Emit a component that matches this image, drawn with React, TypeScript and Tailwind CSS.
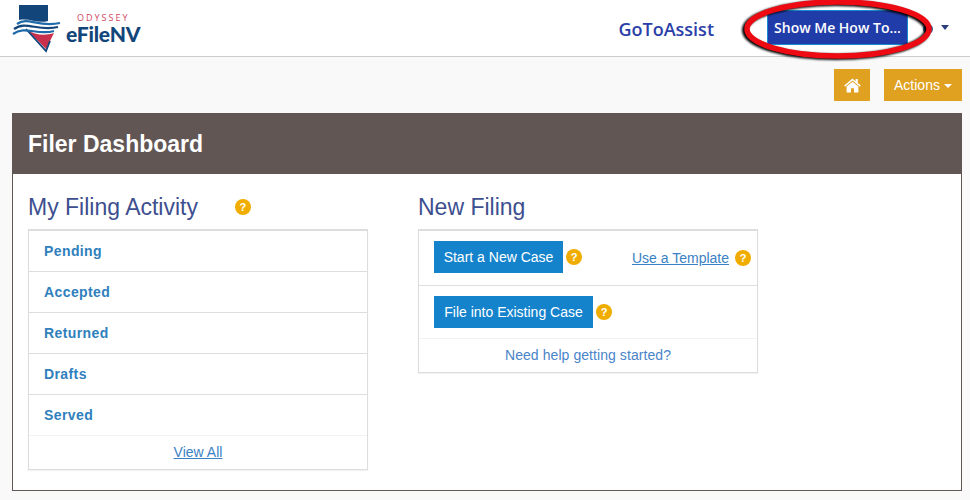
import React from "react";

function Help({ className = "" }: { className?: string }) {
  return (
    <span className={`inline-flex h-4 w-4 shrink-0 items-center justify-center rounded-full bg-[#f0ad00] text-[11px] font-bold leading-none text-white ${className}`}>?</span>
  );
}

function Logo() {
  return (
    <div className="flex items-start">
      <svg width="62" height="54" viewBox="0 0 62 54" className="shrink-0">
        <path d="M19 5 H48 V21 C 38 24, 30 18, 19 20 Z" fill="#12467b" />
        <path d="M27 30 C 35 35, 45 36, 54 33 L50 41 L46 49 Z" fill="#c8304c" />
        <path d="M26 29 L46 51 L50 41" fill="none" stroke="#12467b" strokeWidth="1.8" />
        <path d="M17 24 C 28 16, 38 28, 60 23" fill="none" stroke="#1f6aa8" strokeWidth="2.2" />
        <path d="M14 29 C 26 20, 38 32, 58 27" fill="none" stroke="#12467b" strokeWidth="2.2" />
        <path d="M13 34 C 25 25, 37 36, 54 31" fill="none" stroke="#1f6aa8" strokeWidth="2.2" />
      </svg>
      <div className="ml-[4px] mt-[13px] flex flex-col">
        <span className="ml-[11px] font-['Open_Sans',sans-serif] text-[9px] leading-[10px] tracking-[2px] text-[#d2455f]">ODYSSEY</span>
        <span className="font-['Lato',sans-serif] text-[21px] font-black leading-[22px] tracking-[-0.2px] text-[#12467b]">eFileNV</span>
      </div>
    </div>
  );
}

export default function App() {
  const rows = ["Pending", "Accepted", "Returned", "Drafts", "Served"];
  return (
    <div className="h-[500px] w-[970px] overflow-hidden bg-[#f9f9f9] font-['Liberation_Sans',sans-serif]">
      <header className="relative flex h-[57px] items-start justify-between border-b border-[#cccccc] bg-white">
        <Logo />
        <div className="flex items-start pr-[21px] pt-[10px]">
          <span className="mt-[3px] font-['Open_Sans',sans-serif] text-[18px] font-semibold leading-[32px] text-[#2b3fa8]">GoToAssist</span>
          <span className="ml-[53px] flex h-[35px] w-[141px] items-center justify-center border border-[#1a8ad0] bg-[#203ca8] font-['Open_Sans',sans-serif] text-[14px] font-semibold text-white">Show Me How To...</span>
          <span className="ml-[15px] mt-[14px] h-[10px] w-[10px] rounded-full bg-[#3b5a8f]" />
          <span className="ml-[8px] mt-[15px] h-0 w-0 border-x-[4px] border-t-[5px] border-x-transparent border-t-[#2b3f7f]" />
        </div>
        <svg width="212" height="66" viewBox="0 0 212 66" className="absolute left-[732px] top-0">
          <defs>
            <filter id="soft" x="-10%" y="-20%" width="120%" height="140%">
              <feGaussianBlur stdDeviation="0.8" />
            </filter>
          </defs>
          <ellipse cx="104" cy="30" rx="91" ry="27" fill="none" stroke="#000" strokeWidth="6" filter="url(#soft)" />
          <ellipse cx="106" cy="29" rx="91" ry="27" fill="none" stroke="#ee0a12" strokeWidth="5.5" />
        </svg>
      </header>

      <div className="flex h-[56px] items-start justify-end gap-[14px] pr-[8px] pt-[12px]">
        <button className="flex h-[32px] w-[36px] items-center justify-center bg-[#e0a020]">
          <svg width="17" height="15" viewBox="0 0 17 15" fill="white">
            <path d="M8.5 0.6 L0.2 7.6 L1.1 8.7 L8.5 2.6 L15.9 8.7 L16.8 7.6 L13.8 5 V1 H11.6 V3.2 Z" />
            <path d="M8.5 3.8 L2.6 8.6 V14.4 H7 V10.2 H10 V14.4 H14.4 V8.6 Z" />
          </svg>
        </button>
        <button className="flex h-[32px] w-[78px] items-center justify-center bg-[#e0a020] text-[14px] text-white">
          Actions
          <span className="ml-[4px] mt-[1px] h-0 w-0 border-x-[4px] border-t-[4px] border-x-transparent border-t-white" />
        </button>
      </div>

      <main className="mx-[12px] h-[378px] w-[950px] border border-[#625655] bg-white">
        <div className="flex h-[60px] items-center bg-[#625655] pl-[15px] text-[23px] font-bold text-white">Filer Dashboard</div>
        <div className="flex pl-[15px] pt-[18px]">
          <section className="w-[340px]">
            <div className="flex h-[37px] items-start">
              <h2 className="text-[23px] leading-[30px] text-[#3d4f8f]">My Filing Activity</h2>
              <Help className="ml-[37px] mt-[7px]" />
            </div>
            <div className="border border-t-2 border-[#dddddd] shadow-[0_1px_1px_rgba(0,0,0,0.05)]">
              {rows.map((r, i) => (
                <div key={r} className={`flex h-[41px] items-center px-[15px] text-[14px] font-bold tracking-[0.4px] text-[#2f80bd] ${i < 4 ? "border-b border-[#dddddd]" : "border-b border-[#f2f2f2]"}`}>{r}</div>
              ))}
              <div className="flex h-[33px] items-center justify-center text-[14px] text-[#3b82c4] underline">View All</div>
            </div>
          </section>
          <section className="ml-[50px] w-[340px]">
            <h2 className="h-[37px] text-[23px] leading-[30px] text-[#3d4f8f]">New Filing</h2>
            <div className="border border-t-2 border-[#dddddd] shadow-[0_1px_1px_rgba(0,0,0,0.05)]">
              <div className="flex h-[55px] items-start border-b border-[#dddddd] pl-[15px] pt-[10px]">
                <span className="flex h-[32px] w-[129px] items-center justify-center bg-[#1583cc] text-[14px] text-white">Start a New Case</span>
                <Help className="ml-[3px] mt-[8px]" />
                <span className="ml-[50px] mt-[9px] text-[14px] leading-[16px] text-[#3b82c4] underline">Use a Template</span>
                <Help className="ml-[6px] mt-[9px]" />
              </div>
              <div className="flex h-[53px] items-start border-b border-[#f2f2f2] pl-[15px] pt-[10px]">
                <span className="flex h-[32px] w-[159px] items-center justify-center bg-[#1583cc] text-[14px] text-white">File into Existing Case</span>
                <Help className="ml-[3px] mt-[8px]" />
              </div>
              <div className="flex h-[33px] items-center justify-center text-[14px] tracking-[0.07px] text-[#4a84c9]">Need help getting started?</div>
            </div>
          </section>
        </div>
      </main>
    </div>
  );
}
